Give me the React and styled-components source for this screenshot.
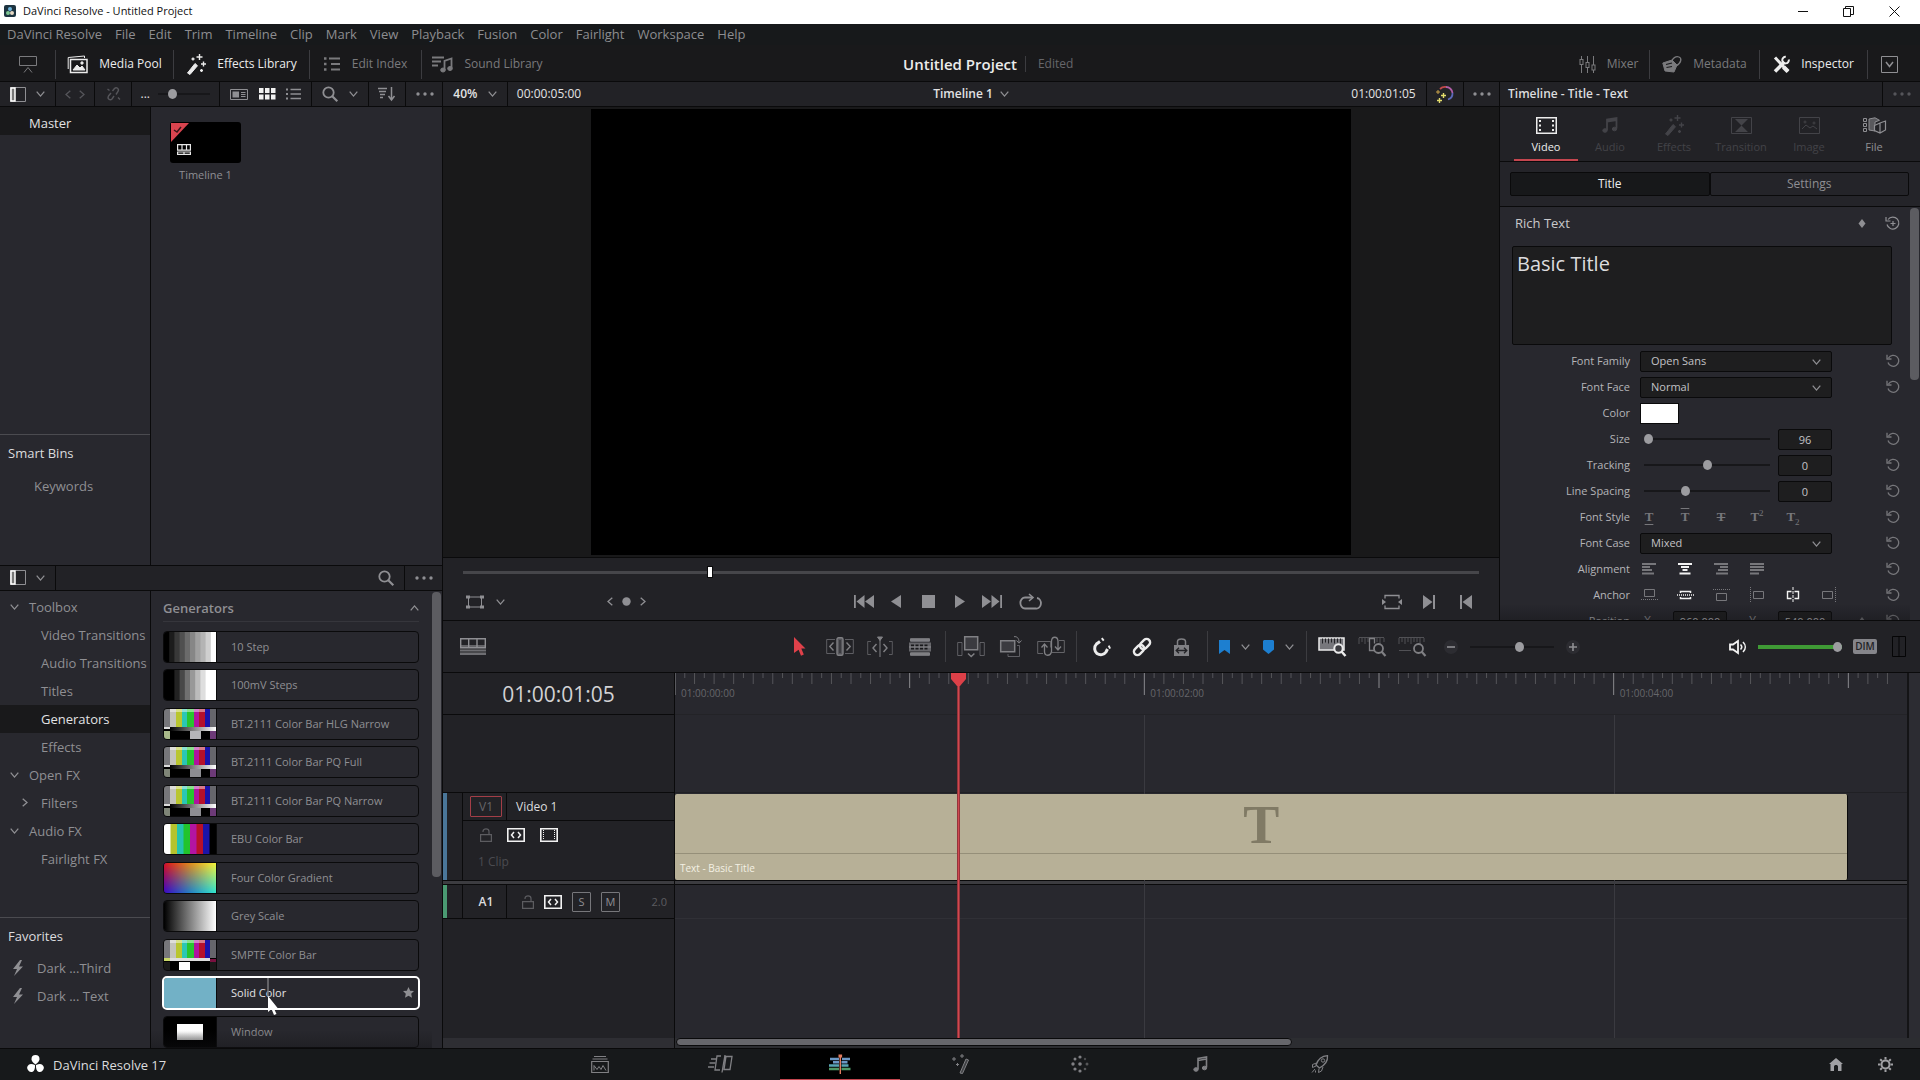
import React from 'react'
import styled, { createGlobalStyle, css } from 'styled-components'

const FPS = 24
const VIEW_FRAMES = 126
const CLIP_FRAMES = 120
const PLAYHEAD = 29

const MENUS = ['DaVinci Resolve', 'File', 'Edit', 'Trim', 'Timeline', 'Clip', 'Mark', 'View', 'Playback', 'Fusion', 'Color', 'Fairlight', 'Workspace', 'Help']

const GENERATORS = [
    { name: '10 Step', thumb: 'tenStep' },
    { name: '100mV Steps', thumb: 'mvSteps' },
    { name: 'BT.2111 Color Bar HLG Narrow', thumb: 'hlg' },
    { name: 'BT.2111 Color Bar PQ Full', thumb: 'pq' },
    { name: 'BT.2111 Color Bar PQ Narrow', thumb: 'pq' },
    { name: 'EBU Color Bar', thumb: 'ebu' },
    { name: 'Four Color Gradient', thumb: 'four' },
    { name: 'Grey Scale', thumb: 'grey' },
    { name: 'SMPTE Color Bar', thumb: 'smpte' },
    { name: 'Solid Color', thumb: 'solid', selected: true },
    { name: 'Window', thumb: 'window' },
]

const TREE = [
    { name: 'Toolbox', arrow: 'down' },
    { name: 'Video Transitions', child: true },
    { name: 'Audio Transitions', child: true },
    { name: 'Titles', child: true },
    { name: 'Generators', child: true, active: true },
    { name: 'Effects', child: true },
    { name: 'Open FX', arrow: 'down' },
    { name: 'Filters', child: true, arrow: 'right' },
    { name: 'Audio FX', arrow: 'down' },
    { name: 'Fairlight FX', child: true },
]

// every glyph is drawn in its own pixel box: [width, height, shapes]
const GLYPHS = {
    app: [12, 12, <><rect width="12" height="12" rx="2" fill="#1d3440" stroke="none" /><circle cx="6" cy="4" r="2" fill="#6fb6dd" stroke="none" /><circle cx="4" cy="8" r="2" fill="#7fc793" stroke="none" /><circle cx="8" cy="8" r="2" fill="#e6d9c4" stroke="none" /></>],
    minimize: [10, 10, <path d="M0 5.5h10" />],
    restore: [11, 11, <><path d="M.5 2.5h7v8h-7z" /><path d="M2.5 2.5v-2h8v8h-3" /></>],
    close: [11, 11, <path d="M.5.5l10 10M10.5.5l-10 10" />],
    chevDown: [9, 6, <path d="M.7.7l3.8 4.4L8.3.7" strokeWidth="1.3" />],
    chevUp: [9, 6, <path d="M.7 5.3L4.5.9l3.8 4.4" strokeWidth="1.3" />],
    chevLeft: [6, 9, <path d="M5.3.7L1 4.5l4.3 3.8" strokeWidth="1.3" />],
    chevRight: [6, 9, <path d="M.7.7L5 4.5.7 8.3" strokeWidth="1.3" />],
    monitor: [18, 18, <><path d="M.5 1.5h17v9H.5zM5 17.5l4-5 4 5" /></>],
    mediaPool: [21, 18, <><path d="M3.5 4.5H20v13H3.5z" strokeWidth="1.5" /><path d="M1.2 14V2.5L17.5 1v2" /><path d="M6 15l4-5 3 3 2-2 3 4z" fill="currentColor" /><circle cx="15" cy="8" r="1.2" fill="currentColor" /></>],
    wand: [20, 21, <><path d="M1.5 19L9 9.5l2.5 2.2L4 20.5z" fill="currentColor" /><path d="M13.5 0v6M10.5 3h6M17.5 7.5v5M15 10h5M7 3.5v3M5.5 5h3M15.5 15v3M14 16.5h3" strokeWidth="1.4" /></>],
    list: [17, 14, <><path d="M5 1.5h11M7 7h9M7 12.5h9" strokeWidth="2" /><path d="M0 1.5h2.5M0 7h2.5M0 12.5h2.5" strokeWidth="2.4" /></>],
    sound: [21, 17, <><path d="M0 1.5h12M0 5.5h9M0 9.5h6" strokeWidth="1.8" /><path d="M12.5 14V5l7-2.5V12" strokeWidth="1.8" /><ellipse cx="11" cy="14" rx="2.3" ry="2" fill="currentColor" /><ellipse cx="18" cy="12.5" rx="2.3" ry="2" fill="currentColor" /></>],
    mixer: [17, 17, <><path d="M2.5 0v3M2.5 9v8M8.5 0v6M8.5 12v5M14.5 0v9M14.5 14v3" /><rect x="1" y="3.5" width="3" height="5" /><rect x="7" y="6.5" width="3" height="5" /><rect x="13" y="9" width="3" height="5" /></>],
    metadata: [20, 17, <><path d="M.8 7L10 4l5 5-3 7-9-1z" fill="currentColor" /><path d="M10 6C10 2 14 0 17 1s2.500 6-3 9" strokeWidth="1.3" /><path d="M4 8.500l6-1.500M4.500 11.500l5.500-1" stroke="#19191b" strokeWidth="1.2" /></>],
    tools: [17, 17, <><path d="M2 1.5l13 14" strokeWidth="3" /><path d="M2 15.5L11.5 6" strokeWidth="3.6" /><path d="M15.8 3.5a3.3 3.3 0 1 1-3-2.7" strokeWidth="2" /><path d="M10.5 11l4.500 4.500" strokeWidth="4.2" /></>],
    boxDown: [17, 17, <><path d="M.5.5h16v16H.5z" /><path d="M5 6l3.5 4.5L12 6" strokeWidth="1.5" /></>],
    sidebar: [16, 15, <><path d="M.5.5h15v14H.5z" /><path d="M1 1h4v13H1z" fill="#777" stroke="#fff" strokeWidth="1.5" /></>],
    unlink: [15, 14, <><path d="M6.5 4l2-2.5c2-2 5 .5 3.5 3L10 7.5M8 9l-2 3c-2 2-5-.5-3.5-3L5 6M1.500 2l2 1.5M12 10.5l2 2" strokeWidth="1.4" /></>],
    card: [18, 11, <><path d="M.5.5h17v10H.5z" /><path d="M2.5 2.5H9v6H2.5z" fill="currentColor" stroke="none" /><path d="M11 3.5h4.500M11 5.5h4.5M11 7.5h4.5" /></>],
    grid: [17, 12, <path d="M0 0h4.5v5H0zM6 0h4.5v5H6zM12 0h4.5v5H12zM0 6.5h4.5v5H0zM6 6.5h4.5v5H6zM12 6.5h4.5v5H12z" fill="currentColor" stroke="none" />],
    listSmall: [15, 12, <><path d="M4.5 1.5H15M4.5 6H15M4.5 10.5H15" strokeWidth="1.5" /><path d="M0 1.5h2M0 6h2M0 10.5h2" strokeWidth="2" /></>],
    search: [16, 16, <><circle cx="6.5" cy="6.5" r="5.2" strokeWidth="1.8" /><path d="M10.3 10.3l5 5" strokeWidth="2.2" /></>],
    sort: [18, 14, <><path d="M0 1.5h9M1 4.5h7M2 7.5h5M2 10.5h3" strokeWidth="1.5" /><path d="M13.5 0v12M10.5 9l3 4 3-4" strokeWidth="1.5" /></>],
    dots: [18, 4, <><circle cx="2" cy="2" r="1.7" fill="currentColor" stroke="none" /><circle cx="9" cy="2" r="1.7" fill="currentColor" stroke="none" /><circle cx="16" cy="2" r="1.7" fill="currentColor" stroke="none" /></>],
    enhance: [18, 17, <><path d="M4 3A7 7 0 0 1 10 1" stroke="#c04a4a" strokeWidth="1.8" /><path d="M10 1a6.5 6.5 0 0 1 6.5 6" stroke="#b05fa8" strokeWidth="1.8" /><path d="M16.5 7a6.5 6.5 0 0 1-4.5 6.5" stroke="#5b68b8" strokeWidth="1.8" /><path d="M2 4v4M0 6h4" stroke="#c9a24a" /><path d="M7.5 7v5M5 9.5h5M3.5 12v5M1 14.5h5" stroke="#e3dc6c" strokeWidth="1.4" /></>],
    film: [21, 17, <><path d="M.75.75h19.5v15.5H.75z" strokeWidth="1.5" /><path d="M4 3v12M17 3v12" strokeWidth="2" strokeDasharray="2 2.5" /></>],
    notes: [16, 16, <><path d="M5 13V2.5L14.5 1v10.5M5 4.5L14.5 3" strokeWidth="1.8" /><ellipse cx="3" cy="13.5" rx="2.2" ry="1.8" fill="currentColor" /><ellipse cx="12.5" cy="12" rx="2.2" ry="1.8" fill="currentColor" /></>],
    transition: [21, 17, <><path d="M.5.5h20v16H.5z" /><path d="M4 2h13l-6.5 6.5zM4 15h13l-6.5-6.5z" fill="currentColor" stroke="none" /></>],
    image: [21, 17, <><path d="M.5.5h20v16H.5z" /><path d="M3 12l4-4 4 3 3-2 4 3" /><circle cx="6" cy="5" r="1" /><circle cx="15" cy="6" r="1" /></>],
    fileCube: [23, 17, <><path d="M.5 1.5h3v3h-3zM.5 6.5h3v3h-3zM.5 11.5h3v3h-3z" /><path d="M6 2l6-1.2 4.500 2.500L12 5v9l-6-1z" fill="currentColor" fillOpacity=".5" /><path d="M11.500 8.500L17 6l5.500-2v9L17 16l-5.500-2.500zM17 6v10" fill="#222226" strokeWidth="1.2" /></>],
    diamond: [8, 9, <path d="M4 0l3.5 4.5L4 9 .5 4.5z" fill="currentColor" stroke="none" />],
    resetPlus: [15, 14, <><path d="M3 3.5a6 6 0 1 1-1 5" strokeWidth="1.2" /><path d="M1 1v4h4.5M8 5v5M5.5 7.5h5" strokeWidth="1.2" /></>],
    reset: [14, 14, <><path d="M2.5 4a5.5 5.5 0 1 1-.5 4.5" strokeWidth="1.3" /><path d="M1 .8V5h4.5" strokeWidth="1.3" /></>],
    alignLeft: [14, 12, <path d="M0 1h14M0 4h8M0 7h10M0 10.5h12" strokeWidth="1.8" />],
    alignCenter: [14, 12, <path d="M0 1h14M3 4h8M4.5 7h5M1.5 10.5h11" strokeWidth="2.2" />],
    alignRight: [14, 12, <path d="M0 1h14M6 4h8M4 7h10M2 10.5h12" strokeWidth="1.8" />],
    alignJustify: [14, 12, <path d="M0 1h14M0 4h14M0 7h14M0 10.5h9" strokeWidth="1.8" />],
    anchorBottom: [17, 12, <><path d="M3.5.5h10v7h-10z" /><path d="M0 10.5h17" strokeDasharray="1 1" /></>],
    anchorMiddle: [17, 12, <><path d="M3.5 4V2.5h10V4M3.5 8v1.5h10V8" strokeWidth="1.5" /><path d="M0 6h17" strokeDasharray="1 1" strokeWidth="1.500" /></>],
    anchorTop: [17, 12, <><path d="M3.5 4.5h10v7h-10z" /><path d="M0 .5h17" strokeDasharray="1 1" /></>],
    anchorLeft: [14, 16, <><path d="M3.5 4.5h10v7h-10z" /><path d="M.5 0v16" strokeDasharray="1 1" /></>],
    anchorCenter: [12, 16, <><path d="M4.5 4.5h-4v7h4M7.5 4.5h4v7h-4" strokeWidth="1.4" /><path d="M6 0v16" strokeDasharray="3 1" /></>],
    anchorRight: [14, 16, <><path d="M.5 4.5h10v7H.5z" /><path d="M13.5 0v16" strokeDasharray="1 1" /></>],
    transform: [18, 14, <><path d="M2.5 2h13v10h-13z" /><path d="M0 .5h4v3H0zM14 .5h4v3h-4zM0 10.5h4v3H0zM14 10.5h4v3h-4z" fill="currentColor" stroke="none" /></>],
    dot: [9, 9, <circle cx="4.5" cy="4.5" r="4.2" fill="currentColor" stroke="none" />],
    first: [20, 13, <path d="M0 0h1.8v13H0zM10.5 0v13L2.5 6.5zM20 0v13L11 6.5z" fill="currentColor" stroke="none" />],
    playBack: [10, 13, <path d="M10 0v13L0 6.5z" fill="currentColor" stroke="none" />],
    stop: [13, 13, <path d="M0 0h13v13H0z" fill="currentColor" stroke="none" />],
    play: [10, 13, <path d="M0 0v13l10-6.5z" fill="currentColor" stroke="none" />],
    last: [20, 13, <path d="M18.2 0H20v13h-1.8zM9.5 0v13l8-6.5zM0 0v13l9-6.5z" fill="currentColor" stroke="none" />],
    loop: [21, 16, <><path d="M6 3.5H5a4.2 5 0 0 0 0 11h11a4.2 5 0 0 0 1-10.5M5 3.5h7" strokeWidth="1.8" /><path d="M9 0l4 3.5L9 7" strokeWidth="1.6" /></>],
    matchFrame: [20, 14, <><path d="M3 3.5v-3h14v3M3 10.5v3h14v-3" strokeWidth="1.3" /><path d="M0 4l4 3-4 3zM20 4l-4 3 4 3z" fill="currentColor" stroke="none" /></>],
    nextClip: [12, 14, <path d="M0 0l9.5 7L0 14zM10 0h2v14h-2z" fill="currentColor" stroke="none" />],
    prevClip: [12, 14, <path d="M12 0L2.5 7 12 14zM0 0h2v14H0z" fill="currentColor" stroke="none" />],
    timelineView: [26, 17, <><path d="M.7.7h24.6v9H.7zM8.7.7v9M17 .7v9" strokeWidth="1.4" /><path d="M1 8h24" strokeWidth="2" opacity=".6" /><path d="M0 11.5h26v2H0zM0 14.5h26V17H0z" fill="currentColor" stroke="none" opacity=".7" /></>],
    arrow: [12, 19, <path d="M0 0l11.5 11.5H7.3l2.5 6-2.8 1.2-2.4-6L0 16z" fill="#e0414a" stroke="none" />],
    trim: [28, 19, <><rect x="11" y=".7" width="6" height="17.6" rx="1.5" fill="#55555a" strokeWidth="1.4" /><path d="M14 3v13" stroke="#222226" /><path d="M9 2.5H.7v14H9M19 2.5h8.3v14H19" opacity=".65" /><path d="M7.5 5.5L3.8 9.5l3.7 4M20.5 5.5l3.7 4-3.700 4" strokeWidth="1.4" /></>],
    dynTrim: [26, 20, <><path d="M13 2v18" /><path d="M10.5 0h5L13 3.5z" fill="currentColor" /><path d="M4 4.5H.7v13H4M22 4.5h3.3v13H22" opacity=".6" /><path d="M9.5 7L6 11l3.5 4M16.5 7L20 11l-3.5 4" strokeWidth="1.4" /></>],
    blade: [22, 18, <><path d="M1.500 .700h19v2.500h-19zM1.500 14.800h19v2.500h-19z" fill="currentColor" /><path d="M0 4.500h22v9H0z" fill="#66666a" stroke="none" /><path d="M2 9h18" strokeWidth="5" stroke="#19191b" strokeDasharray="3 1.500" /><path d="M0 9h22" strokeWidth="1.500" /></>],
    insert: [28, 22, <><path d="M7.7.7h13v13h-13z" strokeWidth="1.5" fill="#3b3b40" /><path d="M5 6.500H.7v13H5zM23 6.500h4.3v13H23z" opacity=".65" /><path d="M11 17.500l3.2 3 3.200-3" strokeWidth="1.5" /></>],
    overwrite: [22, 21, <><path d="M.7 4.700h14v11H.7z" strokeWidth="1.5" fill="#3b3b40" /><path d="M8 18v2.5h11.5v-11H17" opacity=".65" /><path d="M14 .7c3-.5 5 1.5 5 5.5M16.5 4.5L19 7.2l2.5-2.7" /></>],
    replace: [28, 21, <><path d="M6 17.5H.7v-12h13v6M15 16.500h12.300v-12H22" opacity=".7" /><path d="M7.5 8.500v7c0 5 6 5 7 0V5c.5-5 6-5 6.500 0v8M4.500 11.500l3-3.500 3 3.500M18 10.500l3 3.500 3-3.500" strokeWidth="1.3" /></>],
    magnet: [18, 19, <><path d="M7 4.500L3.500 7c-3 3-2 7.500.5 9.500 3 2 7 1.500 9-1.500l1.500-3" strokeWidth="3" /><path d="M9 3l1.500-1.200M15.500 10.500l1.800-.8" strokeWidth="3.200" /></>],
    link: [18, 18, <g transform="rotate(-45 9 9)" strokeWidth="2.4"><rect x="-1" y="5.5" width="11.5" height="7" rx="3.5" /><rect x="7.5" y="5.5" width="11.5" height="7" rx="3.5" /></g>],
    lockTrack: [15, 18, <><path d="M3.5 7V3.5c0-3.5 8-3.5 8 0V7" strokeWidth="1.5" /><path d="M0 7h15v11H0z" fill="currentColor" stroke="none" /><path d="M2.5 12.5h10M5 9.8l-2.8 2.7L5 15.2M10 9.8l2.8 2.700-2.800 2.700" stroke="#222226" strokeWidth="1.3" /></>],
    flag: [11, 14, <path d="M0 0h11v14l-5.5-4L0 14z" fill="#1d7fd0" stroke="none" />],
    marker: [11, 14, <path d="M1 0h9l1 1v8.5L5.5 14 0 9.5V1z" fill="#1d7fd0" stroke="none" />],
    zoomFull: [28, 20, <><path d="M1 1h25v12H1z" fill="#77777c" strokeWidth="1.5" /><path d="M4.500 1.500v5M7.500 1.500v4M10.500 1.500v5M13.500 1.500v4M16.500 1.500v5M19.500 1.500v4M22.500 1.500v5" stroke="#222226" /><circle cx="20.5" cy="11.5" r="4.2" fill="#3b3b40" strokeWidth="2" /><path d="M23.5 14.500l4 4.500" strokeWidth="2.500" /></>],
    zoomDetail: [28, 20, <><path d="M1 1v6M4 1v4M7 1v6M10 1v4M19 1v4M22 1v6M26 1v4M1 .5h25" opacity=".5" /><path d="M16.500 13.500h-5v-12h5v5" strokeWidth="1.300" /><circle cx="20.5" cy="11.5" r="4.500" strokeWidth="1.8" /><path d="M23.5 14.500l4 4.500" strokeWidth="2.2" /></>],
    zoomCustom: [28, 20, <><path d="M1 1v6M4 1v4M7 1v6M10 1v4M13 1v6M16 1v4M19 1v4M22 1v6M26 1v4M1 .5h25M1 13.5h12" opacity=".5" /><circle cx="20.5" cy="11.5" r="4.500" strokeWidth="1.8" /><path d="M23.5 14.500l4 4.500" strokeWidth="2.2" /></>],
    minus: [8, 8, <path d="M0 4h8" strokeWidth="1.6" />],
    plus: [8, 8, <path d="M0 4h8M4 0v8" strokeWidth="1.6" />],
    speaker: [18, 14, <><path d="M1 4.5h3L9 1v12L4 9.5H1z" strokeWidth="1.8" /><path d="M11.5 4.5c1.5 1.5 1.5 3.5 0 5M14 2c3 3 3 7 0 10" strokeWidth="1.6" /></>],
    meters: [14, 21, <path d="M.5.5h13v20H.5zM7 .5v20" stroke="#050506" />],
    openLock: [12, 14, <><path d="M.6 6.6h10.8v6.8H.6z" strokeWidth="1.2" /><path d="M3 4V3.500c0-3.500 6-3.500 6 0V6" strokeWidth="1.2" /></>],
    autoSelect: [18, 14, <><path d="M.8.8h16.4v12.4H.8z" strokeWidth="1.6" /><path d="M7 4L4.5 7 7 10M11 4l2.5 3-2.5 3" strokeWidth="1.5" /></>],
    videoTrack: [18, 14, <><path d="M.8.8h16.4v12.4H.8z" strokeWidth="1.6" /><path d="M3.5 2v10M14.5 2v10" strokeDasharray="1 1" /></>],
    timelineBadge: [14, 11, <><path d="M.6.6h12.8v5.500H.6zM5 .6v5.500M9.500.6v5.500M.6 8h12.800v2.400H.6zM7 8v2.400" strokeWidth="1.2" /></>],
    bolt: [12, 16, <path d="M8 0L1 9h4l-3 7 9-9.5H7L10 0z" fill="currentColor" stroke="none" />],
    star: [11, 11, <path d="M5.5 0l1.7 3.7 3.8.4-2.8 2.7.8 4-3.5-2-3.5 2 .8-4L0 4.1l3.8-.4z" fill="currentColor" stroke="none" />],
    logo: [19, 19, <><path d="M9.5 9.5C6 7 5.5 5 5.5 4a4 4 0 0 1 8 0c0 1-.5 3-4 5.5zM9 10c.3 4-1 5.8-1.9 6.4a4 4 0 0 1-4.3-6.7C3.8 9 6 8.7 9 10zM10 10c-.3 4 1 5.8 1.9 6.4a4 4 0 0 0 4.3-6.7C15.2 9 13 8.7 10 10z" fill="#fff" stroke="none" /></>],
    pageMedia: [18, 17, <><path d="M.7 5.500h16.600v11H.7zM1.500 3h15M3 .5h12" strokeWidth="1.2" /><path d="M3 14.500v-5l3 4 2-3 2 3 2-4 3 5" /></>],
    pageCut: [25, 18, <><path d="M13 1H9L7 15h5M14 17.500l3-17.500M18 1.5h6l-2 13h-6z" strokeWidth="1.3" /><path d="M3 4h5M1.5 8h6M0 12h6" strokeWidth="1.5" /></>],
    pageEdit: [22, 20, <><path d="M1 5h9M4 8.300h6M13 5h8M12.500 8.300h6" stroke="#6b97c4" strokeWidth="2.500" /><path d="M0 11.600h10M12.500 11.600h7" stroke="#58a5b5" strokeWidth="2.500" /><path d="M0 15h10M12.500 15h9" stroke="#4f9a67" strokeWidth="2.500" /><path d="M11.3 2v18" stroke="#e07a5f" strokeWidth="1.4" /><path d="M9.500.5h3.600v3H9.500z" fill="#e07a5f" stroke="none" /></>],
    pageFusion: [18, 20, <><path d="M9 19L15 5l2.500 1L11.500 19.500z" fill="currentColor" fillOpacity=".4" /><path d="M3 3v4M1 5h4M11 0v4M9 2h4M6.500 9v3M5 10.500h3" /></>],
    pageColor: [18, 18, <g fill="currentColor" stroke="none"><circle cx="9" cy="2" r="1.600" /><circle cx="14" cy="4" r="1.200" opacity=".5" /><circle cx="16" cy="9" r="1.500" opacity=".6" /><circle cx="14" cy="14" r="1.300" opacity=".6" /><circle cx="9" cy="16" r="1.600" /><circle cx="4" cy="14" r="1.600" /><circle cx="2" cy="9" r="1.700" /><circle cx="4" cy="4" r="1.500" /><circle cx="9" cy="9" r="1.800" /></g>],
    pageFair: [15, 16, <><path d="M5 13V2.5L13.5 1v10.5M5 4.5L13.5 3" strokeWidth="1.6" /><ellipse cx="3" cy="13.5" rx="2.2" ry="1.8" fill="currentColor" /><ellipse cx="11.5" cy="12" rx="2.2" ry="1.8" fill="currentColor" /></>],
    pageDeliver: [18, 18, <><path d="M5 10C7 4 11 1 16.5.7 17 6 14 10 8.5 13z" strokeWidth="1.3" /><circle cx="12" cy="5.5" r="1.7" /><path d="M5.5 8L1.5 9.5v3L5 11M8 13.5l-.5 4 3-1.500 1.500-4M4 14l-3 3.500M4.500 15.500v2" /></>],
    home: [14, 13, <path d="M7 0l7 6h-1.5v7H9V8.5c0-2-4-2-4 0V13H1.5V6H0z" fill="currentColor" stroke="none" />],
    gear: [15, 15, <><circle cx="7.5" cy="7.5" r="4" strokeWidth="2" /><path d="M7.5 0v2.500M7.500 12.500V15M0 7.500h2.500M12.500 7.500H15M2.200 2.200L4 4M11 11l1.800 1.800M12.800 2.200L11 4M4 11l-1.800 1.800" strokeWidth="2" /></>],
}

function Glyph({ name }) {
    const [w, h, shapes] = GLYPHS[name]
    return (
        <GlyphSvg width={w} height={h} viewBox={`0 0 ${w} ${h}`} aria-hidden="true">
            {shapes}
        </GlyphSvg>
    )
}

const BARS = ['#77777b', '#c4c4bc', '#b9c62f', '#2bc7b4', '#27c52f', '#b0139f', '#b5102b', '#1a12a8', '#66666c']

function ColorBars({ left, tail }) {
    const xs = [0, 6, 12, 18, 23, 30, 35, 41, 46, 52]
    return (
        <>
            <rect width="52" height="30" fill="#000" />
            {BARS.map((c, i) => <rect key={i} x={xs[i]} y="0" width={xs[i + 1] - xs[i]} height="18" fill={c} />)}
            <path d="M6 1.5h35" stroke="#fff" strokeWidth="3" opacity=".45" />
            {tail}
            <rect x="0" y="22" width="6" height="8" fill={left} />
        </>
    )
}

function Thumb({ kind }) {
    const steps = (colors) => colors.map((c, i) => (
        <rect key={i} x={i * 52 / colors.length} width={52 / colors.length + 1} height="30" fill={c} />
    ))
    return (
        <ThumbSvg viewBox="0 0 52 30" preserveAspectRatio="none" aria-hidden="true">
            <defs>
                <linearGradient id="ramp"><stop offset="0" stopColor="#000" /><stop offset="1" stopColor="#fff" /></linearGradient>
                <linearGradient id="warm"><stop offset="0" stopColor="#d8101c" /><stop offset=".5" stopColor="#e08a1c" /><stop offset="1" stopColor="#f4f43a" /></linearGradient>
                <linearGradient id="cool"><stop offset="0" stopColor="#3a08c8" /><stop offset=".5" stopColor="#2280c8" /><stop offset="1" stopColor="#2fe6d0" /></linearGradient>
                <linearGradient id="fade" x2="0" y2="1"><stop offset="0" stopColor="#fff" /><stop offset="1" stopColor="#000" /></linearGradient>
                <linearGradient id="pane" x2="0" y2="1"><stop offset=".5" stopColor="#fff" /><stop offset="1" stopColor="#bbb" /></linearGradient>
                <mask id="fadeMask"><rect width="52" height="30" fill="url(#fade)" /></mask>
            </defs>
            {kind === 'tenStep' && steps(['#000', '#1c1c1c', '#383838', '#505050', '#6b6b6b', '#868686', '#a0a0a0', '#b4b4b4', '#cfcfcf', '#fff'])}
            {kind === 'mvSteps' && steps(['#000', '#000', '#222', '#484848', '#707070', '#989898', '#bbb', '#dedede', '#fff', '#fff'])}
            {(kind === 'hlg' || kind === 'pq') && (
                <ColorBars left={kind === 'hlg' ? '#a9b98a' : '#7f8578'} tail={<>
                    <rect x="6" y="18" width="46" height="4" fill="url(#ramp)" />
                    <rect y="18" width="6" height="2" fill="#ddd" />
                    <rect x="26" y="22" width="11" height="8" fill={kind === 'hlg' ? '#b5b5b8' : '#8d8d92'} />
                    <rect x="46" y="22" width="6" height="8" fill="#6d3a78" />
                </>} />
            )}
            {kind === 'smpte' && (
                <ColorBars left="#1a1a1a" tail={<>
                    <rect x="6" y="18" width="40" height="3" fill="#ddd" />
                    <rect y="18" width="6" height="3" fill="#c9d86a" />
                    <rect x="46" y="19" width="6" height="3" fill="#7a1040" />
                    <rect x="15" y="22" width="11" height="8" fill="#fff" />
                    <rect x="46" y="22" width="6" height="8" fill="#1a1a1a" />
                </>} />
            )}
            {kind === 'ebu' && steps(['#fff', '#b6c32d', '#25c3ae', '#22c42b', '#b315a2', '#b81029', '#1c14a8', '#000'])}
            {kind === 'four' && <><rect width="52" height="30" fill="url(#cool)" /><rect width="52" height="30" fill="url(#warm)" mask="url(#fadeMask)" /></>}
            {kind === 'grey' && <rect width="52" height="30" fill="url(#ramp)" />}
            {kind === 'solid' && <rect width="52" height="30" fill="#72b1c6" />}
            {kind === 'window' && <><rect width="52" height="30" fill="#000" /><rect x="13" y="7" width="26" height="16" fill="url(#pane)" /></>}
        </ThumbSvg>
    )
}

function Slider({ label, value, ...rest }) {
    return <Range type="range" aria-label={label} min="0" max="100" defaultValue={value} {...rest} />
}

function MediaPool() {
    return (
        <Panel>
            <SubBar>
                <Cell $w={56}><IconButton aria-label="Bin list"><Glyph name="sidebar" /></IconButton><IconButton aria-label="Bin options"><Glyph name="chevDown" /></IconButton></Cell>
                <Cell $w={39} $dim><IconButton aria-label="Back"><Glyph name="chevLeft" /></IconButton><IconButton aria-label="Forward"><Glyph name="chevRight" /></IconButton></Cell>
                <Cell $w={37} $dim><IconButton aria-label="Relink media"><Glyph name="unlink" /></IconButton></Cell>
                <Cell $w={88}><CellText>...</CellText><Slider label="Thumbnail size" value={22} $w={52} $track="#17171a" /></Cell>
                <Cell $w={92}>
                    <IconButton aria-label="Metadata view"><Glyph name="card" /></IconButton>
                    <IconButton $on aria-label="Thumbnail view"><Glyph name="grid" /></IconButton>
                    <IconButton aria-label="List view"><Glyph name="listSmall" /></IconButton>
                </Cell>
                <Cell $w={57}><IconButton aria-label="Search media"><Glyph name="search" /></IconButton><IconButton aria-label="Search options"><Glyph name="chevDown" /></IconButton></Cell>
                <Cell $w={37}><IconButton aria-label="Sort"><Glyph name="sort" /></IconButton></Cell>
                <Cell $w={37}><IconButton aria-label="Media pool options"><Glyph name="dots" /></IconButton></Cell>
            </SubBar>
            <Split>
                <Bins>
                    <BinRow $active>Master</BinRow>
                    <SmartBins>
                        <SideTitle>Smart Bins</SideTitle>
                        <Keyword>Keywords</Keyword>
                    </SmartBins>
                </Bins>
                <ClipArea>
                    <ClipCard>
                        <ClipThumb>
                            <ClipFlag viewBox="0 0 18 19" aria-hidden="true">
                                <path d="M0 0h18L0 19z" fill="#d9444f" />
                                <path d="M3 7l3 2 4-5" stroke="#3a1518" strokeWidth="1.5" fill="none" />
                            </ClipFlag>
                            <Glyph name="timelineBadge" />
                        </ClipThumb>
                        Timeline 1
                    </ClipCard>
                </ClipArea>
            </Split>
        </Panel>
    )
}

function EffectsLibrary() {
    return (
        <Panel $line>
            <SubBar>
                <Cell $w={56}><IconButton aria-label="Category list"><Glyph name="sidebar" /></IconButton><IconButton aria-label="Category options"><Glyph name="chevDown" /></IconButton></Cell>
                <Cell $fill $end><IconButton aria-label="Search effects"><Glyph name="search" /></IconButton></Cell>
                <Cell $w={37}><IconButton aria-label="Effects options"><Glyph name="dots" /></IconButton></Cell>
            </SubBar>
            <Split>
                <Bins>
                    <Tree>
                        {TREE.map((t) => (
                            <TreeRow key={t.name} $child={t.child} $active={t.active}>
                                <TreeArrow>{t.arrow && <Glyph name={t.arrow === 'down' ? 'chevDown' : 'chevRight'} />}</TreeArrow>
                                {t.name}
                            </TreeRow>
                        ))}
                    </Tree>
                    <Favorites>
                        <SideTitle>Favorites</SideTitle>
                        <Favorite><Glyph name="bolt" />Dark ...Third</Favorite>
                        <Favorite><Glyph name="bolt" />Dark ... Text</Favorite>
                    </Favorites>
                </Bins>
                <GeneratorPane>
                    <GeneratorHead>Generators<Glyph name="chevUp" /></GeneratorHead>
                    <GeneratorList>
                        {GENERATORS.map((g) => (
                            <Generator key={g.name} $selected={g.selected}>
                                <Thumb kind={g.thumb} />
                                <GeneratorName>{g.name}</GeneratorName>
                                {g.selected && <Glyph name="star" />}
                                {g.selected && (
                                    <Pointer viewBox="0 0 12 38" aria-hidden="true">
                                        <path d="M1 0v18" stroke="#77777b" strokeWidth="1.5" />
                                        <path d="M1 18v16l3.5-3 2.5 6 2.5-1-2.500-5.500H11z" fill="#fff" />
                                    </Pointer>
                                )}
                            </Generator>
                        ))}
                    </GeneratorList>
                </GeneratorPane>
                <ScrollTrack><ScrollThumb $h={285} /></ScrollTrack>
            </Split>
        </Panel>
    )
}

function Viewer() {
    return (
        <ViewerPanel>
            <SubBar>
                <BarSide>
                    <Cell $w={65}><CellText $strong>40%</CellText><Glyph name="chevDown" /></Cell>
                    <Cell $w={82}><CellText>00:00:05:00</CellText></Cell>
                </BarSide>
                <TimelinePicker>Timeline 1<Glyph name="chevDown" /></TimelinePicker>
                <BarSide $end>
                    <Cell $w={86}><CellText>01:00:01:05</CellText></Cell>
                    <Cell $w={37}><IconButton aria-label="Bypass grades"><Glyph name="enhance" /></IconButton></Cell>
                    <Cell $w={35}><IconButton aria-label="Viewer options"><Glyph name="dots" /></IconButton></Cell>
                </BarSide>
            </SubBar>
            <Stage><Frame /></Stage>
            <ScrubRow><Scrub type="range" aria-label="Playhead" min="0" max={CLIP_FRAMES} defaultValue={PLAYHEAD} /></ScrubRow>
            <Transport>
                <TransportSide>
                    <IconButton aria-label="Transform"><Glyph name="transform" /></IconButton>
                    <IconButton aria-label="Transform options"><Glyph name="chevDown" /></IconButton>
                    <JogGroup>
                        <IconButton aria-label="Previous edit"><Glyph name="chevLeft" /></IconButton>
                        <IconButton aria-label="Jog"><Glyph name="dot" /></IconButton>
                        <IconButton aria-label="Next edit"><Glyph name="chevRight" /></IconButton>
                    </JogGroup>
                </TransportSide>
                <TransportKeys>
                    {['first', 'playBack', 'stop', 'play', 'last', 'loop'].map((k) => (
                        <TransportKey key={k} aria-label={k}><Glyph name={k} /></TransportKey>
                    ))}
                </TransportKeys>
                <TransportSide $end>
                    {['matchFrame', 'nextClip', 'prevClip'].map((k) => (
                        <TransportKey $wide key={k} aria-label={k}><Glyph name={k} /></TransportKey>
                    ))}
                </TransportSide>
            </Transport>
        </ViewerPanel>
    )
}

function SelectRow({ label, value }) {
    const id = label.replace(' ', '-')
    return (
        <Row>
            <RowLabel htmlFor={id}>{label}</RowLabel>
            <SelectWrap>
                <Select id={id} defaultValue={value}><option>{value}</option></Select>
                <Glyph name="chevDown" />
            </SelectWrap>
            <ResetButton aria-label={`Reset ${label}`}><Glyph name="reset" /></ResetButton>
        </Row>
    )
}

function SliderRow({ label, value, position }) {
    const id = label.replace(' ', '-')
    return (
        <Row>
            <RowLabel htmlFor={id}>{label}</RowLabel>
            <SliderField>
                <Slider label={`${label} slider`} value={position} $w={126} $track="#17171a" />
                <NumberBox id={id} defaultValue={value} />
            </SliderField>
            <ResetButton aria-label={`Reset ${label}`}><Glyph name="reset" /></ResetButton>
        </Row>
    )
}

function ButtonRow({ label, children }) {
    return (
        <Row role="group" aria-label={label}>
            <RowLabel as="span">{label}</RowLabel>
            <IconSet>{children}</IconSet>
            <ResetButton aria-label={`Reset ${label}`}><Glyph name="reset" /></ResetButton>
        </Row>
    )
}

function Inspector() {
    const tabs = [['Video', 'film'], ['Audio', 'notes'], ['Effects', 'wand'], ['Transition', 'transition'], ['Image', 'image'], ['File', 'fileCube']]
    return (
        <InspectorPanel>
            <SubBar>
                <InspectorTitle>Timeline - Title - Text</InspectorTitle>
                <Cell $w={37} $dim><IconButton aria-label="Inspector options"><Glyph name="dots" /></IconButton></Cell>
            </SubBar>
            <InspectorTabs>
                {tabs.map(([name, icon]) => (
                    <InspectorTab key={name} $active={name === 'Video'} $ready={name === 'File'}>
                        <TabIcon><Glyph name={icon} /></TabIcon>
                        {name}
                    </InspectorTab>
                ))}
            </InspectorTabs>
            <SegmentBar>
                <Segment $active>Title</Segment>
                <Segment>Settings</Segment>
            </SegmentBar>
            <InspectorScroll>
                <InspectorBody>
                    <RichHead>
                        <label htmlFor="rich">Rich Text</label>
                        <RichActions>
                            <IconButton aria-label="Add keyframe"><Glyph name="diamond" /></IconButton>
                            <IconButton aria-label="Reset text"><Glyph name="resetPlus" /></IconButton>
                        </RichActions>
                    </RichHead>
                    <RichText id="rich" defaultValue="Basic Title" spellCheck="false" />
                    <SelectRow label="Font Family" value="Open Sans" />
                    <SelectRow label="Font Face" value="Normal" />
                    <Row>
                        <RowLabel as="span">Color</RowLabel>
                        <Swatch aria-label="Text color" />
                    </Row>
                    <SliderRow label="Size" value="96" position={0} />
                    <SliderRow label="Tracking" value="0" position={50} />
                    <SliderRow label="Line Spacing" value="0" position={32} />
                    <ButtonRow label="Font Style">
                        <StyleButton $line="underline" aria-label="Underline">T</StyleButton>
                        <StyleButton $line="overline" aria-label="Overline">T</StyleButton>
                        <StyleButton $line="line-through" aria-label="Strikethrough">T</StyleButton>
                        <StyleButton aria-label="Superscript">T<sup>2</sup></StyleButton>
                        <StyleButton aria-label="Subscript">T<sub>2</sub></StyleButton>
                    </ButtonRow>
                    <SelectRow label="Font Case" value="Mixed" />
                    <ButtonRow label="Alignment">
                        {['alignLeft', 'alignCenter', 'alignRight', 'alignJustify'].map((k) => (
                            <SetButton key={k} $on={k === 'alignCenter'} aria-label={k}><Glyph name={k} /></SetButton>
                        ))}
                    </ButtonRow>
                    <ButtonRow label="Anchor">
                        {['anchorBottom', 'anchorMiddle', 'anchorTop', 'anchorLeft', 'anchorCenter', 'anchorRight'].map((k) => (
                            <SetButton key={k} $on={k === 'anchorMiddle' || k === 'anchorCenter'} aria-label={k}><Glyph name={k} /></SetButton>
                        ))}
                    </ButtonRow>
                    <Row>
                        <RowLabel as="span">Position</RowLabel>
                        <PositionFields>
                            <label htmlFor="posx">X</label><NumberBox id="posx" defaultValue="960.000" />
                            <label htmlFor="posy">Y</label><NumberBox id="posy" defaultValue="540.000" />
                        </PositionFields>
                        <ResetButton aria-label="Reset Position"><Glyph name="diamond" /><Glyph name="reset" /></ResetButton>
                    </Row>
                </InspectorBody>
                <ScrollTrack><ScrollThumb $h={172} /></ScrollTrack>
            </InspectorScroll>
        </InspectorPanel>
    )
}

const at = (frame) => `${frame / VIEW_FRAMES * 100}%`

function Ruler() {
    const ticks = Array.from({ length: VIEW_FRAMES - 1 }, (_, i) => i)
    const height = (f) => {
        if (f % (FPS * 2) === 0) return 22
        if (f % FPS === 0) return 15
        return f % 2 === 0 ? 11 : 5
    }
    return (
        <RulerBox>
            <RulerSvg aria-hidden="true">
                {ticks.map((f) => (
                    <line key={f} x1={at(f)} x2={at(f)} y1="0" y2={height(f)} stroke={f % FPS === 0 ? '#8a8a8e' : '#55555a'} />
                ))}
            </RulerSvg>
            {[0, 2, 4].map((s) => (
                <RulerLabel key={s} style={{ left: at(s * FPS) }}>01:00:0{s}:00</RulerLabel>
            ))}
        </RulerBox>
    )
}

function Timeline() {
    return (
        <TimelinePanel>
            <TimelineBar>
                <BarSide><ViewButton aria-label="Timeline view options"><Glyph name="timelineView" /></ViewButton></BarSide>
                <Tools>
                    <ToolGroup $open>
                        {['arrow', 'trim', 'dynTrim', 'blade'].map((k) => <Tool key={k} aria-label={k}><Glyph name={k} /></Tool>)}
                    </ToolGroup>
                    <ToolGroup>
                        {['insert', 'overwrite', 'replace'].map((k) => <Tool key={k} aria-label={k}><Glyph name={k} /></Tool>)}
                    </ToolGroup>
                    <ToolGroup>
                        <Tool $on aria-label="Snapping"><Glyph name="magnet" /></Tool>
                        <Tool $on aria-label="Linked selection"><Glyph name="link" /></Tool>
                        <Tool aria-label="Position lock"><Glyph name="lockTrack" /></Tool>
                    </ToolGroup>
                    <ToolGroup $roomy>
                        <MarkerPair>
                            <IconButton aria-label="Flag"><Glyph name="flag" /></IconButton><IconButton aria-label="Flag colors"><Glyph name="chevDown" /></IconButton>
                        </MarkerPair>
                        <MarkerPair>
                            <IconButton aria-label="Marker"><Glyph name="marker" /></IconButton><IconButton aria-label="Marker colors"><Glyph name="chevDown" /></IconButton>
                        </MarkerPair>
                    </ToolGroup>
                    <ToolGroup $last>
                        <Tool $on aria-label="Full extent zoom"><Glyph name="zoomFull" /></Tool>
                        <Tool aria-label="Detail zoom"><Glyph name="zoomDetail" /></Tool>
                        <Tool aria-label="Custom zoom"><Glyph name="zoomCustom" /></Tool>
                        <Round aria-label="Zoom out"><Glyph name="minus" /></Round>
                        <Slider label="Timeline zoom" value={61} $w={84} $track="#17171a" />
                        <Round aria-label="Zoom in"><Glyph name="plus" /></Round>
                    </ToolGroup>
                </Tools>
                <BarSide $end>
                    <AudioGroup>
                        <IconButton $on aria-label="Mute"><Glyph name="speaker" /></IconButton>
                        <Slider label="Volume" value={100} $w={84} $track="#3f9a35" $thick />
                        <Dim>DIM</Dim>
                        <IconButton aria-label="Meters"><Glyph name="meters" /></IconButton>
                    </AudioGroup>
                </BarSide>
            </TimelineBar>
            <TrackArea>
                <Heads>
                    <Timecode>01:00:01:05</Timecode>
                    <HeadGap />
                    <VideoHead>
                        <TrackColor $color="#4a7699" />
                        <TrackGutter />
                        <TrackBody>
                            <TrackTop>
                                <TrackTag><TrackName $boxed>V1</TrackName></TrackTag>
                                <TrackTitle>Video 1</TrackTitle>
                            </TrackTop>
                            <TrackIcons>
                                <IconButton $faint aria-label="Lock video track"><Glyph name="openLock" /></IconButton>
                                <IconButton $on aria-label="Auto select video"><Glyph name="autoSelect" /></IconButton>
                                <IconButton $on aria-label="Enable video track"><Glyph name="videoTrack" /></IconButton>
                            </TrackIcons>
                            <ClipCount>1 Clip</ClipCount>
                        </TrackBody>
                    </VideoHead>
                    <Divider />
                    <AudioHead>
                        <TrackColor $color="#4a9a72" />
                        <TrackGutter />
                        <TrackTag><TrackName>A1</TrackName></TrackTag>
                        <AudioIcons>
                            <IconButton $faint aria-label="Lock audio track"><Glyph name="openLock" /></IconButton>
                            <IconButton $on aria-label="Auto select audio"><Glyph name="autoSelect" /></IconButton>
                            <SquareButton aria-label="Solo">S</SquareButton>
                            <SquareButton aria-label="Mute track">M</SquareButton>
                            <Channels>2.0</Channels>
                        </AudioIcons>
                    </AudioHead>
                </Heads>
                <Canvas>
                    {[2, 4].map((s) => <GridLine key={s} style={{ left: at(s * FPS) }} />)}
                    <Ruler />
                    <HeadGap $canvas />
                    <VideoLane>
                        <Clip style={{ width: at(CLIP_FRAMES) }}>
                            <ClipPicture>T</ClipPicture>
                            <ClipLabel>Text - Basic Title</ClipLabel>
                        </Clip>
                    </VideoLane>
                    <Divider />
                    <AudioLane />
                    <PlayheadMark style={{ left: at(PLAYHEAD) }}>
                        <svg width="15" height="13" viewBox="0 0 15 13" aria-hidden="true"><path d="M0 0h15v6l-6 7H6L0 6z" fill="#dc4048" /></svg>
                    </PlayheadMark>
                </Canvas>
                <Rail />
            </TrackArea>
            <ScrollRow><HeadFoot /><HScroll><HThumb /></HScroll></ScrollRow>
        </TimelinePanel>
    )
}

export default function App() {
    const pages = ['pageMedia', 'pageCut', 'pageEdit', 'pageFusion', 'pageColor', 'pageFair', 'pageDeliver']
    return (
        <>
            <GlobalStyle />
            <Window>
                <TitleBar>
                    <Glyph name="app" />
                    DaVinci Resolve - Untitled Project
                    <WindowButtons>
                        <IconButton aria-label="Minimize"><Glyph name="minimize" /></IconButton>
                        <IconButton aria-label="Restore"><Glyph name="restore" /></IconButton>
                        <IconButton aria-label="Close"><Glyph name="close" /></IconButton>
                    </WindowButtons>
                </TitleBar>
                <MenuBar>
                    {MENUS.map((m) => <MenuItem key={m}>{m}</MenuItem>)}
                </MenuBar>
                <Header>
                    <HeaderSide>
                        <HeaderButton $w={56} aria-label="Full screen viewer"><Glyph name="monitor" /></HeaderButton>
                        <HeaderButton $w={118} $on><Glyph name="mediaPool" />Media Pool</HeaderButton>
                        <HeaderButton $w={136} $on><Glyph name="wand" />Effects Library</HeaderButton>
                        <HeaderButton $w={112}><Glyph name="list" />Edit Index</HeaderButton>
                        <HeaderButton $w={132} $last><Glyph name="sound" />Sound Library</HeaderButton>
                    </HeaderSide>
                    <ProjectName>Untitled Project</ProjectName>
                    <HeaderSide $end>
                        <Edited>Edited</Edited>
                        <HeaderButton $w={82}><Glyph name="mixer" />Mixer</HeaderButton>
                        <HeaderButton $w={110}><Glyph name="metadata" />Metadata</HeaderButton>
                        <HeaderButton $w={108} $on><Glyph name="tools" />Inspector</HeaderButton>
                        <ExpandButton aria-label="Expand"><Glyph name="boxDown" /></ExpandButton>
                    </HeaderSide>
                </Header>
                <Workspace>
                    <LeftColumn>
                        <MediaPool />
                        <EffectsLibrary />
                    </LeftColumn>
                    <MainColumn>
                        <UpperRow>
                            <Viewer />
                            <Inspector />
                        </UpperRow>
                        <Timeline />
                    </MainColumn>
                </Workspace>
                <PageBar>
                    <Brand><Glyph name="logo" />DaVinci Resolve 17</Brand>
                    <Pages>
                        {pages.map((p) => (
                            <PageTab key={p} href="#" $active={p === 'pageEdit'} aria-label={p}><Glyph name={p} /></PageTab>
                        ))}
                    </Pages>
                    <PageEnd>
                        <IconButton aria-label="Project manager"><Glyph name="home" /></IconButton>
                        <IconButton aria-label="Project settings"><Glyph name="gear" /></IconButton>
                    </PageEnd>
                </PageBar>
            </Window>
        </>
    )
}

const GlobalStyle = createGlobalStyle`
* { box-sizing: border-box; }
body {
    margin: 0;
    background: #19191b;
    color: #8f8f93;
    font-family: "Open Sans", "Noto Sans", sans-serif;
    font-size: 12px;
    line-height: 16px;
}
button, input, select, textarea { font: inherit; color: inherit; }
`

const GlyphSvg = styled.svg`
flex: none;
display: block;
fill: none;
stroke: currentColor;
overflow: visible;
`

const plainButton = css`
border: 0;
padding: 0;
background: none;
cursor: pointer;
`

const IconButton = styled.button`
${plainButton}
display: flex;
align-items: center;
color: ${({ $on, $faint }) => $on ? '#f2f2f2' : $faint ? '#5c5c60' : 'inherit'};
`

const Window = styled.div`
display: flex;
flex-direction: column;
height: 100vh;
min-height: 800px;
overflow: hidden;
`

const TitleBar = styled.header`
display: flex;
align-items: center;
gap: 7px;
height: 24px;
padding: 0 20px 2px 4px;
background: #fff;
color: #111;
font-size: 11px;
`

const WindowButtons = styled.div`
display: flex;
align-items: center;
gap: 35px;
margin-left: auto;
`

const MenuBar = styled.nav`
display: flex;
align-items: center;
gap: 13px;
height: 21px;
padding: 0 7px 2px;
background: #17191b;
`

const MenuItem = styled.button`
${plainButton}
color: #8d8d90;
font-size: 13px;
`

const Header = styled.div`
display: grid;
grid-template-columns: 1fr auto 1fr;
align-items: center;
height: 36px;
padding-top: 2px;
`

const HeaderSide = styled.div`
display: flex;
align-items: center;
justify-content: ${({ $end }) => $end ? 'flex-end' : 'flex-start'};
`

const HeaderButton = styled.button`
${plainButton}
display: flex;
align-items: center;
justify-content: center;
gap: 11px;
width: ${({ $w }) => $w}px;
height: 29px;
border-right: 1px solid ${({ $last }) => $last ? 'transparent' : '#3c3c40'};
color: ${({ $on }) => $on ? '#ececec' : '#7a7a7d'};
white-space: nowrap;
`

const ExpandButton = styled(IconButton)`
justify-content: center;
width: 52px;
padding-right: 10px;
color: #8f8f93;
`

const ProjectName = styled.h1`
margin: 0;
color: #ececec;
font-size: 15px;
font-weight: 600;
`

const Edited = styled.span`
margin: 0 auto 0 8px;
padding-left: 12px;
border-left: 1px solid #3c3c40;
color: #66666a;
`

const Workspace = styled.main`
display: flex;
flex: 1;
min-height: 0;
border-top: 1px solid #0a0a0b;
`

const LeftColumn = styled.aside`
display: flex;
flex-direction: column;
width: 443px;
flex: none;
border-right: 1px solid #0a0a0b;
`

const MainColumn = styled.div`
display: flex;
flex-direction: column;
flex: 1;
min-width: 0;
`

const UpperRow = styled.div`
display: flex;
flex: 1;
min-height: 0;
`

const Panel = styled.section`
display: flex;
flex-direction: column;
flex: 1 1 0;
min-height: 0;
background: #28282e;
border-top: ${({ $line }) => $line ? '1px solid #0a0a0b' : '0'};
`

const SubBar = styled.div`
display: flex;
flex: none;
height: 25px;
background: #222226;
border-bottom: 1px solid #0a0a0b;
`

const Cell = styled.div`
display: flex;
align-items: center;
justify-content: ${({ $end }) => $end ? 'flex-end' : 'space-evenly'};
flex: ${({ $fill }) => $fill ? '1' : 'none'};
width: ${({ $w }) => $w ? `${$w}px` : 'auto'};
padding-right: ${({ $end }) => $end ? '10px' : '0'};
border-right: 1px solid #0a0a0b;
color: ${({ $dim }) => $dim ? '#55555a' : '#8f8f93'};
&:last-child { border-right: 0; }
`

const CellText = styled.span`
color: #e2e2e4;
font-weight: ${({ $strong }) => $strong ? 600 : 400};
line-height: 18px;
`

const Range = styled.input`
appearance: none;
width: ${({ $w }) => $w}px;
height: 12px;
margin: 0;
background: linear-gradient(${({ $track }) => $track}, ${({ $track }) => $track}) center / 100% ${({ $thick }) => $thick ? 4 : 2}px no-repeat;
&::-webkit-slider-thumb {
    appearance: none;
    width: 9px;
    height: 10px;
    border-radius: 50%;
    background: #9c9ca0;
}
`

const Split = styled.div`
display: flex;
flex: 1;
min-height: 0;
`

const Bins = styled.div`
display: flex;
flex-direction: column;
width: 151px;
flex: none;
border-right: 1px solid #0a0a0b;
font-size: 13px;
`

const BinRow = styled.div`
height: 28px;
padding: 8px 29px 4px;
background: ${({ $active }) => $active ? '#19191b' : 'none'};
color: #e2e2e4;
`

const SmartBins = styled.div`
height: 131px;
margin-top: auto;
padding-top: 10px;
border-top: 1px solid #4b4b50;
`

const SideTitle = styled.h2`
margin: 0 0 0 8px;
color: #dcdcde;
font-size: 13px;
font-weight: 400;
`

const Keyword = styled.div`
margin: 17px 0 0 34px;
`

const ClipArea = styled.div`
flex: 1;
padding: 15px 19px;
`

const ClipCard = styled.div`
width: 71px;
font-size: 11px;
text-align: center;
`

const ClipThumb = styled.div`
display: flex;
align-items: flex-end;
position: relative;
height: 41px;
margin-bottom: 4px;
padding: 8px 7px;
border-radius: 3px;
background: #000;
color: #e8e8e8;
overflow: hidden;
`

const ClipFlag = styled.svg`
position: absolute;
top: 1px;
left: 1px;
width: 18px;
height: 19px;
`

const Tree = styled.div`
padding-top: 2px;
flex: 1;
`

const TreeRow = styled.div`
display: flex;
align-items: center;
gap: 5px;
height: 28px;
padding-left: ${({ $child }) => $child ? 22 : 10}px;
background: ${({ $active }) => $active ? '#19191b' : 'none'};
color: ${({ $active }) => $active ? '#e2e2e4' : 'inherit'};
white-space: nowrap;
`

const TreeArrow = styled.span`
width: 14px;
`

const Favorites = styled.div`
height: 131px;
padding-top: 10px;
border-top: 1px solid #4b4b50;
`

const Favorite = styled.div`
display: flex;
align-items: center;
gap: 13px;
height: 28px;
padding-left: 12px;
${SideTitle} + & { margin-top: 10px; }
`

const GeneratorPane = styled.div`
position: relative;
flex: 1;
min-width: 0;
padding: 0 13px 0 12px;
overflow: hidden;
&::after {
    content: "";
    position: absolute;
    inset: auto 0 0 0;
    height: 18px;
    background: linear-gradient(transparent, rgba(20, 20, 23, 0.4));
}
`

const GeneratorHead = styled.h2`
display: flex;
align-items: center;
justify-content: space-between;
height: 31px;
margin: 0 0 9px;
padding: 5px 0 0;
border-bottom: 1px solid #36363c;
color: #8f8f93;
font-size: 13px;
font-weight: 600;
`

const GeneratorList = styled.div`
display: flex;
flex-direction: column;
gap: 6px;
`

const Generator = styled.div`
display: flex;
align-items: center;
position: relative;
flex: none;
height: 32px;
padding-right: 4px;
border: 1px solid #0a0a0b;
border-radius: 4px;
outline: ${({ $selected }) => $selected ? '2px solid #fff' : '0'};
outline-offset: -1px;
color: ${({ $selected }) => $selected ? '#e2e2e4' : '#8f8f93'};
font-size: 11px;
&:nth-child(even) { margin-bottom: 1px; }
& > svg { color: #8f8f93; }
`

const ThumbSvg = styled.svg`
flex: none;
width: 53px;
height: 30px;
border-right: 1px solid #0a0a0b;
border-radius: 3px 0 0 3px;
`

const GeneratorName = styled.span`
flex: 1;
padding-left: 14px;
`

const Pointer = styled.svg`
position: absolute;
z-index: 1;
left: 103px;
top: 0;
width: 12px;
height: 38px;
`

const ScrollTrack = styled.div`
flex: none;
width: 10px;
padding: 1px 1px 0 0;
`

const ScrollThumb = styled.div`
height: ${({ $h }) => $h}px;
border-radius: 4px;
background: #5c5c61;
`

const ViewerPanel = styled.section`
display: flex;
flex-direction: column;
flex: 1;
min-width: 0;
background: #222226;
`

const BarSide = styled.div`
display: flex;
flex: 1 1 0;
justify-content: ${({ $end }) => $end ? 'flex-end' : 'flex-start'};
`

const TimelinePicker = styled.button`
${plainButton}
display: flex;
align-items: center;
gap: 7px;
color: #e2e2e4;
font-weight: 600;
& > svg { color: #8f8f93; }
`

const Stage = styled.div`
display: flex;
justify-content: center;
flex: 1;
min-height: 0;
padding: 2px 0;
background: #19191a;
border-bottom: 1px solid #0a0a0b;
`

const Frame = styled.div`
width: 72%;
background: #000;
`

const ScrubRow = styled.div`
display: flex;
align-items: center;
height: 28px;
padding: 0 20px;
`

const Scrub = styled.input`
appearance: none;
flex: 1;
height: 14px;
margin: 0;
background: linear-gradient(#46464a, #46464a) center / 100% 3px no-repeat;
&::-webkit-slider-thumb {
    appearance: none;
    width: 6px;
    height: 12px;
    border: 1px solid #0a0a0b;
    background: #fff;
}
`

const Transport = styled.div`
display: flex;
align-items: center;
height: 34px;
padding: 0 15px 3px 23px;
`

const TransportSide = styled.div`
display: flex;
align-items: center;
flex: 1 1 0;
gap: ${({ $end }) => $end ? 0 : 12}px;
justify-content: ${({ $end }) => $end ? 'flex-end' : 'flex-start'};
`

const JogGroup = styled.div`
display: flex;
align-items: center;
gap: 9px;
margin-left: 90px;
`

const TransportKey = styled.button`
${plainButton}
display: flex;
align-items: center;
justify-content: center;
width: ${({ $wide }) => $wide ? 37 : 32}px;
`

const TransportKeys = styled.div`
display: flex;
padding-right: 56px;
& > :last-child { margin-left: 6px; }
`

const InspectorPanel = styled.section`
display: flex;
flex-direction: column;
width: 421px;
flex: none;
border-left: 1px solid #0a0a0b;
background: #28282e;
`

const InspectorTitle = styled.h2`
display: flex;
align-items: center;
flex: 1;
margin: 0;
padding-left: 8px;
border-right: 1px solid #0a0a0b;
color: #dcdcde;
font-size: 12px;
font-weight: 600;
`

const InspectorTabs = styled.div`
display: grid;
grid-template-columns: 64px 64px 64px 70px 66px 64px;
flex: none;
height: 55px;
padding-left: 14px;
background: #222226;
border-bottom: 1px solid #0a0a0b;
`

const InspectorTab = styled.button`
${plainButton}
padding-bottom: 1px;
border-bottom: 2px solid ${({ $active }) => $active ? '#c4464f' : 'transparent'};
color: ${({ $active, $ready }) => $active ? '#ececec' : $ready ? '#8f8f93' : '#434348'};
font-size: 11px;
`

const TabIcon = styled.span`
display: flex;
align-items: center;
justify-content: center;
height: 18px;
margin: 6px 0 5px;
`

const SegmentBar = styled.div`
display: flex;
flex: none;
padding: 10px 11px 10px 10px;
border-bottom: 1px solid #0a0a0b;
background: #242429;
`

const Segment = styled.button`
${plainButton}
flex: 1;
height: 24px;
border: 1px solid #0a0a0b;
border-radius: 2px;
background: ${({ $active }) => $active ? '#17181a' : '#242429'};
color: ${({ $active }) => $active ? '#ececec' : '#8f8f93'};
`

const InspectorScroll = styled.div`
display: flex;
flex: 1;
min-height: 0;
position: relative;
overflow: hidden;
&::after {
    content: "";
    position: absolute;
    inset: auto 10px 0 0;
    height: 16px;
    background: linear-gradient(transparent, rgba(20, 20, 23, 0.4));
}
`

const InspectorBody = styled.div`
flex: 1;
padding-right: 10px;
`

const RichHead = styled.div`
display: flex;
justify-content: space-between;
align-items: center;
height: 32px;
margin-bottom: 7px;
padding: 0 0 0 15px;
color: #c8c8cb;
font-size: 13px;
`

const RichActions = styled.div`
display: flex;
align-items: center;
gap: 19px;
color: #8f8f93;
`

const RichText = styled.textarea`
display: block;
width: calc(100% - 20px);
height: 99px;
margin: 0 0 3px 12px;
padding: 4px;
border: 1px solid #0a0a0b;
border-radius: 2px;
outline: 0;
background: #1e1e1f;
color: #dcdcde;
font-size: 20px;
line-height: 26px;
resize: none;
`

const Row = styled.div`
display: grid;
grid-template-columns: 130px 192px 1fr;
column-gap: 10px;
align-items: center;
height: 26px;
`

const RowLabel = styled.label`
color: #b4b4b8;
font-size: 11px;
text-align: right;
`

const SelectWrap = styled.div`
position: relative;
& > svg { position: absolute; right: 11px; top: 8px; pointer-events: none; }
`

const field = css`
border: 1px solid #0a0a0b;
border-radius: 2px;
background: #1e1e1f;
color: #c2c2c6;
font-size: 11px;
outline: 0;
`

const Select = styled.select`
${field}
appearance: none;
display: block;
width: 100%;
height: 21px;
padding: 0 10px;
`

const SliderField = styled.div`
display: flex;
align-items: center;
justify-content: space-between;
padding-left: 4px;
`

const NumberBox = styled.input`
${field}
width: 54px;
height: 21px;
padding: 0;
text-align: center;
`

const Swatch = styled.button`
${plainButton}
width: 39px;
height: 21px;
border: 1px solid #0a0a0b;
background: #fff;
`

const ResetButton = styled.button`
${plainButton}
display: flex;
align-items: center;
gap: 20px;
justify-self: end;
color: #77777b;
`

const IconSet = styled.div`
display: flex;
margin-left: -9px;
`

const SetButton = styled.button`
${plainButton}
display: flex;
align-items: center;
justify-content: center;
flex: none;
width: 36px;
height: 20px;
color: ${({ $on }) => $on ? '#f2f2f2' : '#77777b'};
`

const StyleButton = styled(SetButton)`
display: block;
font-family: "Liberation Serif", serif;
font-size: 13px;
font-weight: 700;
line-height: 18px;
text-decoration: ${({ $line }) => $line || 'none'};
text-decoration-thickness: 1px;
text-underline-offset: 3px;
sup, sub { font-size: 9px; font-weight: 400; line-height: 8px; }
`

const PositionFields = styled.div`
display: flex;
align-items: center;
justify-content: space-between;
padding-left: 4px;
`

const TimelinePanel = styled.section`
display: flex;
flex-direction: column;
flex: none;
height: 428px;
background: #28282e;
border-top: 1px solid #0a0a0b;
`

const TimelineBar = styled.div`
display: flex;
align-items: center;
flex: none;
height: 52px;
background: #222226;
border-bottom: 1px solid #0a0a0b;
`

const ViewButton = styled(IconButton)`
margin-left: 17px;
`

const Tools = styled.div`
display: flex;
align-items: center;
padding-left: 8px;
`

const ToolGroup = styled.div`
display: flex;
align-items: center;
height: 31px;
gap: ${({ $roomy }) => $roomy ? 6 : 0}px;
padding: 0 ${({ $roomy }) => $roomy ? 8 : 5}px;
border-right: ${({ $last, $open }) => $last ? '0' : '1px solid #3c3c40'};
`

const Tool = styled.button`
${plainButton}
display: flex;
align-items: center;
justify-content: center;
width: 40px;
color: ${({ $on }) => $on ? '#ececec' : '#808084'};
`

const MarkerPair = styled.div`
display: flex;
align-items: center;
justify-content: space-evenly;
gap: 8px;
width: 38px;
`

const Round = styled.button`
${plainButton}
display: flex;
align-items: center;
justify-content: center;
width: 14px;
height: 14px;
margin: 0 12px;
border-radius: 50%;
background: #2c2c31;
`

const AudioGroup = styled.div`
display: flex;
align-items: center;
gap: 11px;
padding-right: 14px;
`

const Dim = styled.button`
${plainButton}
width: 24px;
height: 15px;
margin-right: 4px;
border-radius: 2px;
background: #85858a;
color: #222226;
font-size: 10px;
font-weight: 600;
line-height: 15px;
`

const TrackArea = styled.div`
display: flex;
flex: 1;
min-height: 0;
`

const Heads = styled.div`
display: flex;
flex-direction: column;
width: 232px;
flex: none;
border-right: 1px solid #0a0a0b;
background: #222226;
`

const Timecode = styled.div`
height: 42px;
border-bottom: 1px solid #0a0a0b;
color: #d2d2d4;
font-size: 21px;
line-height: 42px;
text-align: center;
`

const HeadGap = styled.div`
height: 78px;
border-bottom: 1px solid ${({ $canvas }) => $canvas ? '#202024' : '#0a0a0b'};
`

const VideoHead = styled.div`
display: flex;
height: 87px;
`

const AudioHead = styled.div`
display: flex;
height: 34px;
border-bottom: 1px solid #0a0a0b;
`

const TrackColor = styled.div`
width: 4px;
flex: none;
background: ${({ $color }) => $color};
`

const TrackGutter = styled.div`
width: 16px;
flex: none;
border-right: 1px solid #0a0a0b;
`

const TrackBody = styled.div`
flex: 1;
`

const TrackTop = styled.div`
display: flex;
height: 28px;
border-bottom: 1px solid #0a0a0b;
`

const TrackTag = styled.div`
display: flex;
align-items: center;
justify-content: center;
flex: none;
width: 44px;
padding-left: 3px;
border-right: 1px solid #0a0a0b;
`

const TrackName = styled.span`
width: 32px;
border: ${({ $boxed }) => $boxed ? '1px solid #a33e47' : '0'};
border-radius: 1px;
color: ${({ $boxed }) => $boxed ? '#66666a' : '#dcdcde'};
font-weight: ${({ $boxed }) => $boxed ? 400 : 600};
line-height: 19px;
text-align: center;
`

const TrackTitle = styled.span`
padding-left: 9px;
color: #dcdcde;
line-height: 28px;
`

const TrackIcons = styled.div`
display: flex;
align-items: center;
gap: 15px;
height: 27px;
padding-left: 17px;
`

const ClipCount = styled.div`
padding: 6px 0 0 15px;
color: #4b4b50;
`

const AudioIcons = styled.div`
display: flex;
align-items: center;
flex: 1;
gap: 10px;
padding: 0 7px 0 15px;
`

const SquareButton = styled.button`
${plainButton}
width: 19px;
height: 20px;
border: 1px solid #77777b;
border-radius: 1px;
color: #8f8f93;
font-size: 11px;
line-height: 16px;
`

const Channels = styled.span`
margin-left: auto;
color: #5c5c60;
font-size: 11px;
`

const Divider = styled.div`
height: 5px;
flex: none;
border: solid #0a0a0b;
border-width: 1px 0;
background: #3c3c40;
`

const Canvas = styled.div`
display: flex;
flex-direction: column;
position: relative;
flex: 1;
min-width: 0;
overflow: hidden;
`

const RulerBox = styled.div`
position: relative;
height: 42px;
border-bottom: 1px solid #232327;
`

const RulerSvg = styled.svg`
display: block;
width: 100%;
height: 24px;
`

const RulerLabel = styled.span`
position: absolute;
top: 12px;
margin-left: 6px;
color: #66666a;
font-size: 10px;
`

const GridLine = styled.div`
position: absolute;
top: 42px;
bottom: 0;
width: 1px;
background: #3a3a40;
`

const VideoLane = styled.div`
height: 87px;
padding-top: 1px;
`

const Clip = styled.div`
position: relative;
height: 86px;
border-right: 1px solid #0a0a0b;
border-radius: 2px;
background: #b7b097;
`

const ClipPicture = styled.div`
height: 60px;
border-bottom: 1px solid #958f79;
color: #807a65;
font-family: "Liberation Serif", serif;
font-size: 54px;
font-weight: 700;
line-height: 62px;
text-align: center;
`

const ClipLabel = styled.div`
padding: 6px 5px;
color: #f4f1e4;
font-size: 10px;
line-height: 16px;
`

const AudioLane = styled.div`
height: 34px;
border-bottom: 1px solid #303036;
`

const PlayheadMark = styled.div`
position: absolute;
top: 0;
bottom: 0;
width: 15px;
margin-left: -8px;
background: linear-gradient(to right, transparent 6px, #5a1f24 6px, #d04850 7px, #d04850 8px, #5a1f24 9px, transparent 9px);
& > svg { display: block; }
`

const Rail = styled.div`
width: 13px;
flex: none;
border-left: 2px solid #141416;
background: #2c2c32;
`

const ScrollRow = styled.div`
display: flex;
flex: none;
height: 10px;
`

const HeadFoot = styled.div`
width: 232px;
border-right: 1px solid #0a0a0b;
background: #2e2e33;
`

const HScroll = styled.div`
flex: 1;
padding: 0 13px 0 1px;
background: #2c2d31;
`

const HThumb = styled.div`
width: 50%;
height: 8px;
border: 1px solid #0a0a0b;
border-radius: 4px;
background: #66666b;
`

const PageBar = styled.footer`
display: grid;
grid-template-columns: 1fr auto 1fr;
flex: none;
height: 32px;
border-top: 1px solid #0a0a0b;
background: #17191b;
`

const Brand = styled.div`
display: flex;
align-items: center;
gap: 8px;
padding-left: 26px;
color: #dcdcde;
font-size: 13px;
`

const Pages = styled.nav`
display: flex;
`

const PageTab = styled.a`
display: flex;
align-items: center;
justify-content: center;
width: 120px;
background: ${({ $active }) => $active ? '#000' : 'none'};
border-bottom: 1px solid ${({ $active }) => $active ? '#c4464f' : 'transparent'};
color: #808084;
`

const PageEnd = styled.div`
display: flex;
align-items: center;
justify-content: flex-end;
gap: 35px;
padding-right: 27px;
color: #a0a0a4;
`
